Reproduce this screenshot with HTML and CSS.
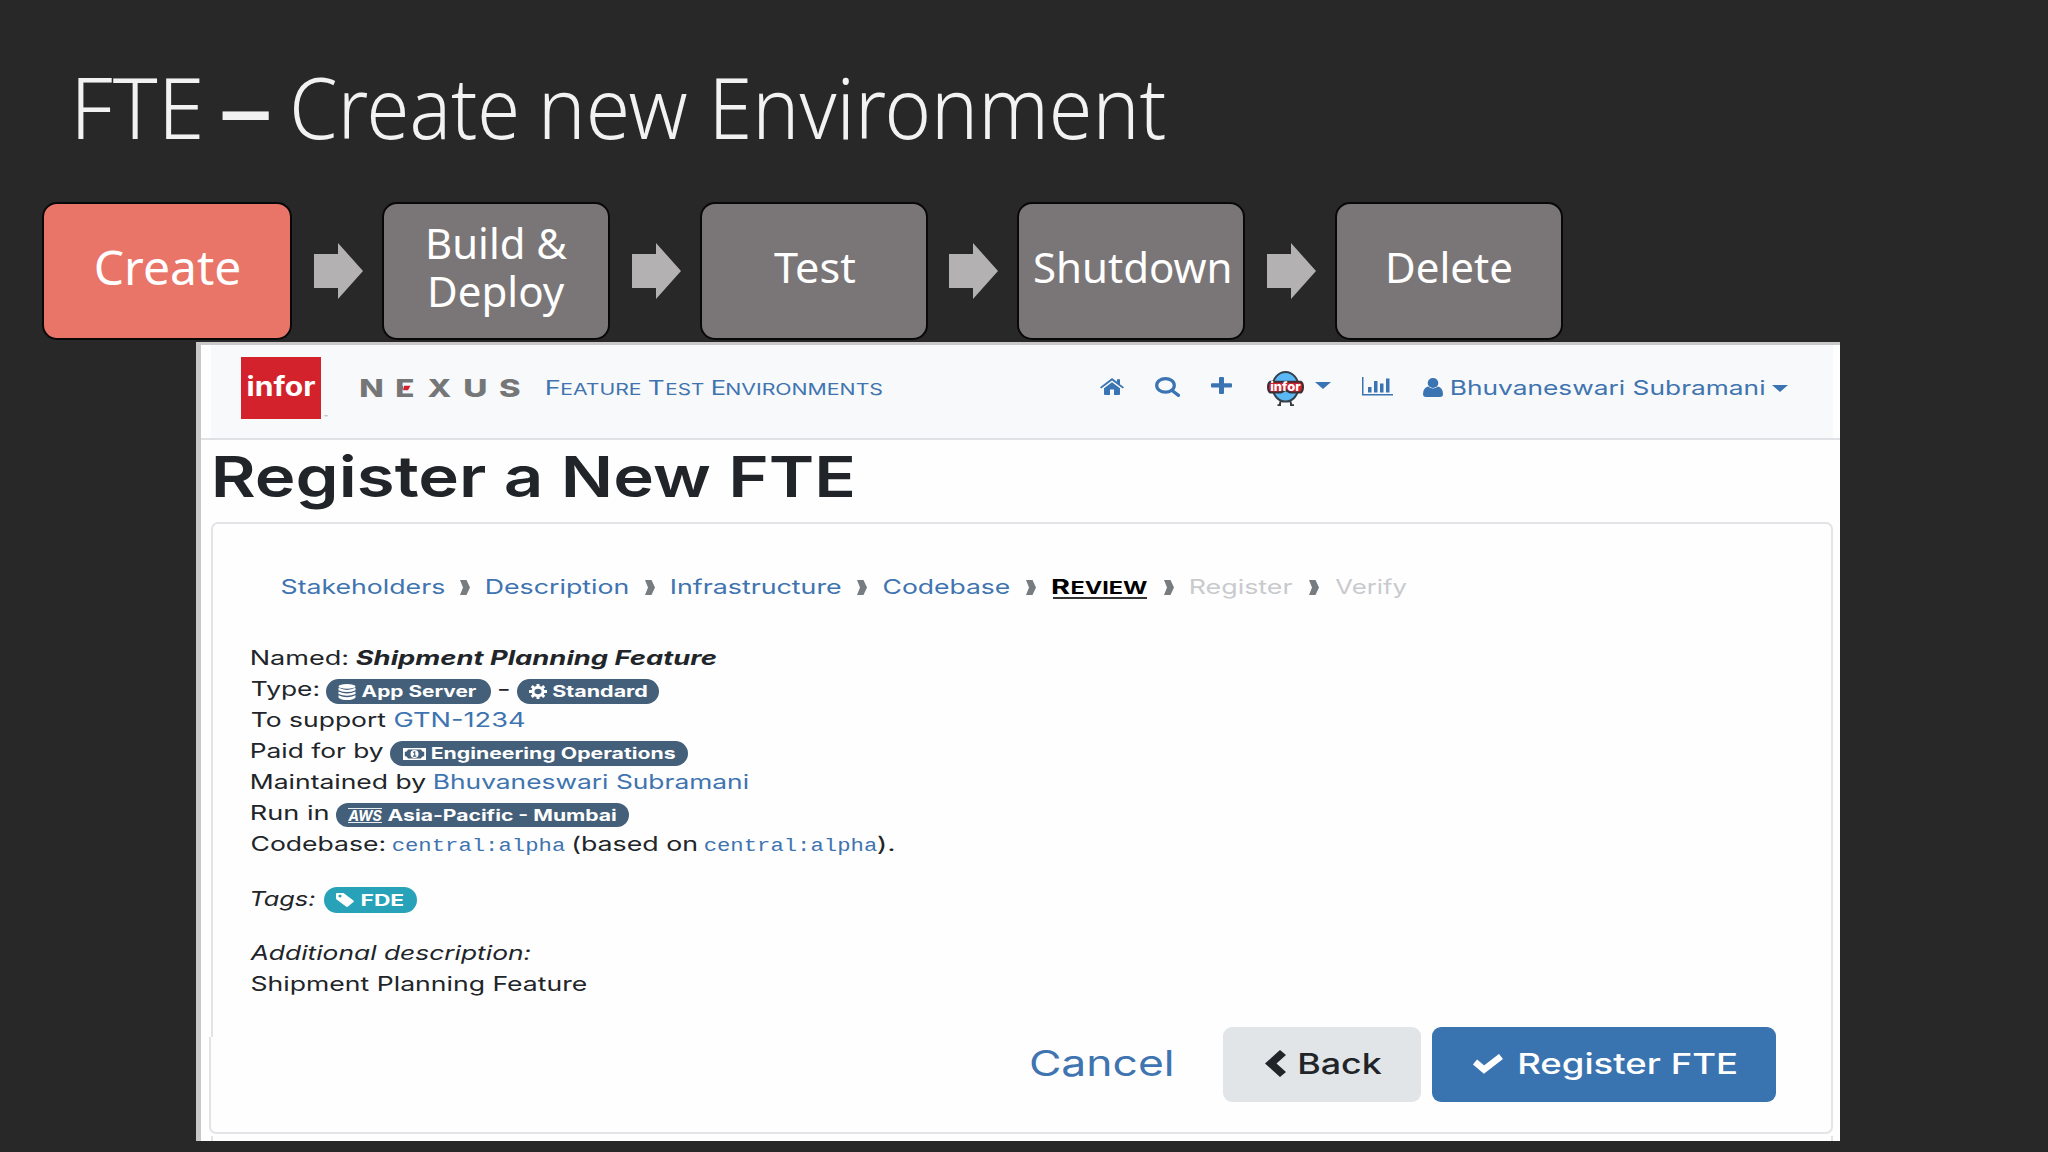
FILE: index.html
```
<!DOCTYPE html>
<html lang="en">
<head>
<meta charset="utf-8">
<title>FTE – Create new Environment</title>
<link rel="stylesheet" href="styles.css">
</head>
<body>
<main class="slide">
  <h1 class="title">
    <span class="fit" style="width:122px">FTE</span>
    <span class="fit dash" style="width:47.5px">–</span>
    <span class="fit" style="width:223px">Create</span>
    <span class="fit" style="width:143.5px">new</span>
    <span class="fit" style="width:449.5px">Environment</span>
  </h1>

  <div class="steps">
    <div class="step active"><span class="fit" style="width:143px">Create</span></div>
    <svg class="arrow" viewBox="0 0 49 56"><path d="M0 11H24V0L49 28L24 56V45H0Z"/></svg>
    <div class="step two"><span class="fit" style="width:138px">Build &amp;</span><span class="fit" style="width:133.5px">Deploy</span></div>
    <svg class="arrow" viewBox="0 0 49 56"><path d="M0 11H24V0L49 28L24 56V45H0Z"/></svg>
    <div class="step"><span class="fit" style="width:81px">Test</span></div>
    <svg class="arrow" viewBox="0 0 49 56"><path d="M0 11H24V0L49 28L24 56V45H0Z"/></svg>
    <div class="step"><span class="fit" style="width:194.5px">Shutdown</span></div>
    <svg class="arrow" viewBox="0 0 49 56"><path d="M0 11H24V0L49 28L24 56V45H0Z"/></svg>
    <div class="step"><span class="fit" style="width:122px">Delete</span></div>
  </div>

  <section class="app">
    <header class="header">
      <div class="bar">
        <div class="logo"><span class="fit" style="width:67px">infor</span></div>
        <span class="tm">™</span>
        <div class="nexus">
          <span class="fit" style="width:21px">N</span>
          <span class="nexus-e"><span class="fit" style="width:16px">E</span><svg viewBox="0 0 11 8"><path class="gap" d="M0 0H11V8H0Z"/><path class="tri" d="M1 1.800H7.500L5 6.200H0Z"/></svg></span>
          <span class="fit" style="width:22.5px">X</span>
          <span class="fit" style="width:20.5px">U</span>
          <span class="fit" style="width:19.5px">S</span>
        </div>
        <a class="brand">
          <span class="word"><span class="fit" style="width:12px">F</span><span class="fit sc" style="width:78.3px">eature</span></span>
          <span class="word"><span class="fit" style="width:14.5px">T</span><span class="fit sc" style="width:36.3px">est</span></span>
          <span class="word"><span class="fit" style="width:11.6px">E</span><span class="fit sc" style="width:155px">nvironments</span></span>
        </a>
        <nav class="nav">
          <svg class="home" viewBox="0 0 24 17"><path d="M12 4.2L20 10.3V16.2Q20 17 19 17H14V11.5H10V17H5Q4 17 4 16.2V10.3Z"/><path d="M12 0L17 3.8V1.2H20V6.2L24 9.3L22.8 10.6L12 2.4L1.200 10.6L0 9.300Z"/></svg>
          <svg class="search" viewBox="0 0 25 20"><ellipse cx="10.500" cy="8.400" rx="8.800" ry="6.800"/><path d="M17 13.500L23.500 18.400"/></svg>
          <svg class="plus" viewBox="0 0 21 17"><path d="M8 1Q8 0 9 0H12Q13 0 13 1V6.200H20Q21 6.200 21 7.200V9.600Q21 10.600 20 10.600H13V16Q13 17 12 17H9Q8 17 8 16V10.600H1Q0 10.600 0 9.600V7.200Q0 6.200 1 6.200H8Z"/></svg>
          <svg class="ninja" viewBox="0 0 37 35"><path class="leg" d="M14 29L12.500 34.500M23 29L24.500 34.500M10.500 34.200H14M23 34.200H27"/><ellipse class="head" cx="18.500" cy="15.800" rx="13" ry="14.800"/><path class="band" d="M3 10.800H34Q36 12 36 16Q36 20 34 21.400H23L18.500 19L14 21.400H3Q1 20 1 16Q1 12 3 10.800Z"/><text x="3.200" y="19.800" textLength="30.500" lengthAdjust="spacingAndGlyphs">infor</text></svg>
          <svg class="caret" viewBox="0 0 16 7"><path d="M0 0H16L8 7Z"/></svg>
          <svg class="chart" viewBox="0 0 31 19"><path d="M0 0H1.500V17H31V18.500H0ZM6 10H9.500V15.500H6ZM12 4H15.500V15.500H12ZM18 6.500H21.500V15.500H18ZM24 1.500H27.500V15.500H24Z"/></svg>
          <svg class="user" viewBox="0 0 20 19"><ellipse cx="10" cy="5" rx="5.300" ry="5"/><path d="M5 8.500Q10 12.500 15 8.500Q20 10 20 16Q20 19 17 19H3Q0 19 0 16Q0 10 5 8.500Z"/></svg>
          <span class="fit name" style="width:312px">Bhuvaneswari Subramani</span>
          <svg class="caret last" viewBox="0 0 16 7"><path d="M0 0H16L8 7Z"/></svg>
        </nav>
      </div>
    </header>

    <h2 class="heading"><span class="fit" style="width:638px">Register a New FTE</span></h2>

    <div class="card">
      <div class="crumbs">
        <a class="fit" style="width:162px">Stakeholders</a>
        <svg class="sep" viewBox="0 0 10 15"><path d="M0 0H6.500L10 7.500L6.500 15H0L3 7.500Z"/></svg>
        <a class="fit" style="width:140.3px">Description</a>
        <svg class="sep" viewBox="0 0 10 15"><path d="M0 0H6.500L10 7.500L6.500 15H0L3 7.500Z"/></svg>
        <a class="fit" style="width:168.4px">Infrastructure</a>
        <svg class="sep" viewBox="0 0 10 15"><path d="M0 0H6.500L10 7.500L6.500 15H0L3 7.500Z"/></svg>
        <a class="fit" style="width:125px">Codebase</a>
        <svg class="sep" viewBox="0 0 10 15"><path d="M0 0H6.500L10 7.500L6.500 15H0L3 7.500Z"/></svg>
        <span class="word current"><span class="fit" style="width:16.6px">R</span><span class="fit sc" style="width:75px">eview</span></span>
        <svg class="sep" viewBox="0 0 10 15"><path d="M0 0H6.500L10 7.500L6.500 15H0L3 7.500Z"/></svg>
        <span class="fit todo" style="width:101px">Register</span>
        <svg class="sep" viewBox="0 0 10 15"><path d="M0 0H6.500L10 7.500L6.500 15H0L3 7.500Z"/></svg>
        <span class="fit todo" style="width:70.5px">Verify</span>
      </div>

      <div class="details">
        <div class="row"><span class="fit" style="width:95px">Named:</span><em class="fit strong" style="width:360px">Shipment Planning Feature</em></div>
        <div class="row">
          <span class="fit" style="width:66px">Type:</span>
          <span class="pill server"><svg class="i-db" viewBox="0 0 18 16"><ellipse cx="9" cy="2.400" rx="8.500" ry="2.400"/><path d="M.5 3.800Q9 8 17.500 3.800V6.200Q9 10 .5 6.200ZM.5 7.600Q9 11.500 17.500 7.600V10Q9 13.500 .5 10ZM.5 11.300Q9 15 17.500 11.300V13.400Q15 16 9 16Q3 16 .5 13.400Z"/></svg><span class="fit" style="width:114px">App Server</span></span>
          <span class="fit hyphen" style="width:9.5px">-</span>
          <span class="pill standard"><svg class="i-gear" viewBox="0 0 18 15"><ellipse cx="9" cy="7.500" rx="5" ry="4.200"/><path d="M9 0V2.800M9 12.200V15M0 7.500H3.400M14.600 7.500H18M2.700 2.200L5 4.200M13 10.800L15.300 12.800M2.700 12.800L5 10.800M13 4.200L15.300 2.200"/></svg><span class="fit" style="width:93.7px">Standard</span></span>
        </div>
        <div class="row"><span class="fit" style="width:133.5px">To support</span><a class="fit gtn" style="width:129px">GTN-1234</a></div>
        <div class="row">
          <span class="fit" style="width:131px">Paid for by</span>
          <span class="pill ops"><svg class="i-money" viewBox="0 0 23 12"><path fill-rule="evenodd" d="M0 0H23V12H0ZM5 1.500Q4.500 3.800 1.800 4V8Q4.500 8.200 5 10.500H18Q18.500 8.200 21.200 8V4Q18.500 3.800 18 1.500Z"/><ellipse cx="11.500" cy="6" rx="4" ry="3.900"/><path class="one" d="M10.200 4.600L11.700 3.800V8M10 8.100H13.300"/></svg><span class="fit" style="width:243px">Engineering Operations</span></span>
        </div>
        <div class="row"><span class="fit" style="width:173.500px">Maintained by</span><a class="fit who" style="width:312.500px">Bhuvaneswari Subramani</a></div>
        <div class="row">
          <span class="fit" style="width:75.500px">Run in</span>
          <span class="pill region"><span class="aws"><span class="fit" style="width:34px">AWS</span></span><span class="fit" style="width:227.7px">Asia-Pacific - Mumbai</span></span>
        </div>
        <div class="row code">
          <span class="fit" style="width:132px">Codebase:</span><a class="fit mono" style="width:171.5px">central:alpha</a><span class="fit based" style="width:122px">(based on</span><a class="fit mono" style="width:171.5px">central:alpha</a><span class="fit end" style="width:15.5px">).</span>
        </div>
        <div class="row tags"><em class="fit" style="width:62.4px">Tags:</em><span class="pill tag"><svg class="i-tag" viewBox="0 0 18 14"><path fill-rule="evenodd" d="M0 1Q0 0 1.200 0H7.500L17.400 7.400Q18.400 8.300 17.400 9.100L12 13.500Q11 14.300 10 13.500L0 6ZM4 1.700A1.600 1.400 0 1 0 4 4.500A1.600 1.400 0 1 0 4 1.700Z"/></svg><span class="fit" style="width:41px">FDE</span></span></div>
        <div class="row extra"><em class="fit" style="width:280px">Additional description:</em></div>
        <div class="row"><span class="fit" style="width:334px">Shipment Planning Feature</span></div>
      </div>
    </div>

    <footer class="actions">
      <a class="fit cancel" style="width:140.5px">Cancel</a>
      <button class="btn back"><svg viewBox="0 0 21 27"><path d="M15 0L21 5L11.500 13.500L21 22L15 27L0 13.500Z"/></svg><span class="fit" style="width:82px">Back</span></button>
      <button class="btn register"><svg viewBox="0 0 32 20"><path d="M3 8L12 15.500L29 2.500"/></svg><span class="fit" style="width:216px">Register FTE</span></button>
    </footer>
    <div class="next-card"></div>
  </section>
</main>
<script src="fit.js"></script>
</body>
</html>
```
FILE: styles.css
```
* { box-sizing: border-box; }
body { margin: 0; background: #282828; }
svg { display: block; flex: none; }
.slide { width: 2048px; height: 1152px; overflow: hidden; background: #282828; display: flex; flex-direction: column; }

/* text stretched to the width of its box */
.fit { display: block; flex: none; white-space: nowrap; text-align: left; }
.fit > span { display: inline-block; transform-origin: 0 50%; }

/* a capital followed by small capitals */
.word { display: flex; align-items: baseline; gap: 3px; }
.sc { font-size: .81em; text-transform: uppercase; }

.title { margin: 57px 0 0; padding-left: 78px; height: 100px; display: flex; font: 300 84px/100px "Noto Sans", sans-serif; color: #f2f2f2; }
.title .fit { margin-right: 28px; }
.title .fit:first-child { margin-right: 22px; }
.title .dash { font-weight: 560; margin-right: 23.500px; }

.steps { display: flex; align-items: center; margin-top: 45px; padding-left: 42px; height: 138px; font: 400 41px/48px "Noto Sans", sans-serif; color: #fff; }
.step { width: 228px; height: 138px; padding: 0 0 8px 2px; border: 2px solid #080808; border-radius: 15px; background: #7a7677; display: flex; flex-direction: column; align-items: center; justify-content: center; flex: none; }
.step.active { width: 250px; padding-left: 0; background: #e97468; font-size: 48px; }
.step.two { padding-left: 4px; }
.arrow { width: 49px; height: 56px; margin: 0 18.900px 0 21.600px; fill: #b3b1b2; }
.step.active + .arrow { margin-right: 19.500px; }

.app { width: 1644px; height: 799px; margin: 2px 0 0 196px; background: #fefefe; border-top: 3px solid #cbc8ca; border-left: 5px solid #c9c8c9; overflow: hidden; flex: none; font: 400 20px/24px Inter, sans-serif; color: #212529; }
.app a { color: #3f74b0; }
.header { height: 95px; padding: 0 7px 0 10px; border-bottom: 2px solid #dfe1e5; }
.bar { height: 93px; padding: 0 0 7px 30px; background: #f8f9fa; display: flex; align-items: center; }
.logo { width: 80px; height: 62px; padding-bottom: 2px; background: #d3222c; color: #fff; display: flex; align-items: center; justify-content: center; font-size: 26px; font-weight: 700; flex: none; }
.tm { width: 9px; margin-left: 3px; padding-top: 60px; font-size: 6px; line-height: 8px; color: #888; }
.nexus { display: flex; gap: 14.500px; margin-left: 28px; width: 157px; font-size: 25px; font-weight: 800; color: #757677; }
.nexus-e { display: grid; }
.nexus-e > * { grid-area: 1 / 1; }
.nexus-e svg { width: 11px; height: 8px; margin: 8px 0 0 6px; z-index: 1; }
.nexus-e .gap { fill: #f8f9fa; }
.nexus-e .tri { fill: #d3222c; }
.brand { display: flex; gap: 9.500px; width: 336px; margin-left: 28.500px; padding-top: 2px; font-size: 19.500px; }
.nav { display: flex; align-items: center; margin-left: 217px; fill: #3a74b2; color: #3f74b0; }
.home { width: 24px; height: 17px; margin-bottom: 4px; }
.search { width: 25px; height: 20px; margin: 0 31px 2px; fill: none; stroke: #3a74b2; stroke-width: 3.200; stroke-linecap: round; }
.plus { width: 21px; height: 17px; margin-bottom: 5px; }
.ninja { width: 37px; height: 35px; margin-left: 35px; }
.ninja .head { fill: #5ab8f5; stroke: #35414a; stroke-width: 2; }
.ninja .band { fill: #cf2130; stroke: #3b3036; stroke-width: 2; }
.ninja .leg { fill: none; stroke: #3b3b3b; stroke-width: 2; }
.ninja text { fill: #fff; font: 800 12.500px Inter, sans-serif; }
.caret { width: 16px; height: 7px; margin: 0 0 6px 11px; }
.chart { width: 31px; height: 19px; margin: 0 30px 4px 31px; }
.user { width: 20px; height: 19px; margin: 0 9px 1px 0; }
.caret.last { margin: 0 0 0 8px; }

.heading { margin: 2px 0 0 14px; height: 70px; font-size: 57px; line-height: 70px; font-weight: 560; }
.card { width: 1622px; height: 515px; margin: 10px 0 0 10px; padding-top: 50px; border: 2px solid #e2e4e7; border-bottom: 0; border-radius: 7px 7px 0 0; }
.crumbs { display: flex; align-items: center; gap: 16.950px; padding: 1px 0 0 68.500px; height: 25px; }
.sep { width: 10px; height: 15px; fill: #777c81; }
.current { font-weight: 700; color: #000; border-bottom: 2px solid #333; height: 24px; }
.current .sc { font-size: .84em; }
.todo { color: #c8cacd; }

.details { margin: 44px 0 0 38.500px; line-height: 31px; }
.row { display: flex; height: 31px; }
.strong { font-weight: 700; margin-left: 9px; }
.pill { display: flex; align-items: center; height: 25px; margin-top: 5px; border-radius: 13px; background: #445f79; fill: #fff; color: #fff; font-size: 15.500px; font-weight: 700; line-height: 25px; flex: none; }
.server { width: 165px; padding-left: 12px; margin-left: 8.500px; }
.i-db { width: 18px; height: 16px; margin-right: 6px; }
.hyphen { margin-left: 8px; }
.standard { width: 142px; padding-left: 12px; margin-left: 8.500px; }
.i-gear { width: 18px; height: 15px; margin-right: 6px; fill: none; stroke: #fff; stroke-width: 3; }
.gtn { margin-left: 9.500px; }
.ops { width: 297.500px; padding-left: 13px; margin-left: 7.500px; }
.i-money { width: 23px; height: 12px; margin-right: 6px; }
.i-money .one { fill: none; stroke: #445f79; stroke-width: 1.100; }
.who { margin-left: 9.500px; }
.region { width: 293.500px; height: 24px; padding-left: 12.500px; margin: 5px 0 0 8.500px; }
.aws { height: 15px; margin-right: 6px; padding-top: 2px; border-top: 1px solid #e8edf2; border-bottom: 1.500px solid #e8edf2; font-size: 14px; font-style: italic; line-height: 10px; }
.mono { font: 400 18px/34px "Liberation Mono", monospace; margin: 0 9px; }
.code .based { margin-left: 1px; }
.code .mono ~ .mono { margin-right: 1.500px; }
.tags { margin-top: 24px; }
.tag { width: 93px; height: 26px; padding-left: 12px; margin: 3px 0 0 10px; background: #27a2b8; }
.i-tag { width: 18px; height: 14px; margin-right: 8.500px; }
.extra { margin: 23px 0 0 -2px; }

.actions { height: 97px; margin: 0 7px 0 8px; padding-right: 55px; border: 2px solid #e2e4e7; border-top: 0; border-radius: 0 0 7px 7px; display: flex; justify-content: flex-end; align-items: flex-start; }
.cancel { margin: -11px 51.500px 0 0; font-size: 36px; line-height: 74px; }
.btn { display: flex; align-items: center; height: 75px; margin: -10.500px 0 0; padding: 0 0 1px; border: 0; border-radius: 9px; font: 500 28.500px/40px Inter, sans-serif; flex: none; }
.back { width: 198px; margin-right: 11px; padding-left: 42px; background: #e1e5e8; color: #212529; }
.back svg { width: 21px; height: 27px; margin-right: 14px; fill: #212529; }
.register { width: 344px; padding-left: 40px; background: #3a74b0; color: #fff; }
.register svg { width: 32px; height: 20px; margin-right: 16px; fill: none; stroke: #fff; stroke-width: 6.500; }
.next-card { height: 5px; margin: 2px 7px 0 10px; border: solid #e2e4e7; border-width: 0 2px; }
```
FILE: fit.js
```
// Stretches each .fit text so that its glyphs span the width of its box.
const ctx = document.createElement('canvas').getContext('2d');
document.querySelectorAll('.fit').forEach((box) => {
  const s = getComputedStyle(box);
  const zoom = 10;
  const text = s.textTransform === 'uppercase' ? box.textContent.toUpperCase() : box.textContent;
  ctx.font = `${s.fontStyle} ${s.fontWeight} ${parseFloat(s.fontSize) * zoom}px ${s.fontFamily}`;
  const m = ctx.measureText(text);
  const left = -m.actualBoundingBoxLeft / zoom;
  const ink = (m.actualBoundingBoxLeft + m.actualBoundingBoxRight) / zoom;
  const k = parseFloat(box.style.width) / ink;
  const inner = document.createElement('span');
  inner.textContent = box.textContent;
  inner.style.transform = `scaleX(${k}) translateX(${-left}px)`;
  box.replaceChildren(inner);
});
```
